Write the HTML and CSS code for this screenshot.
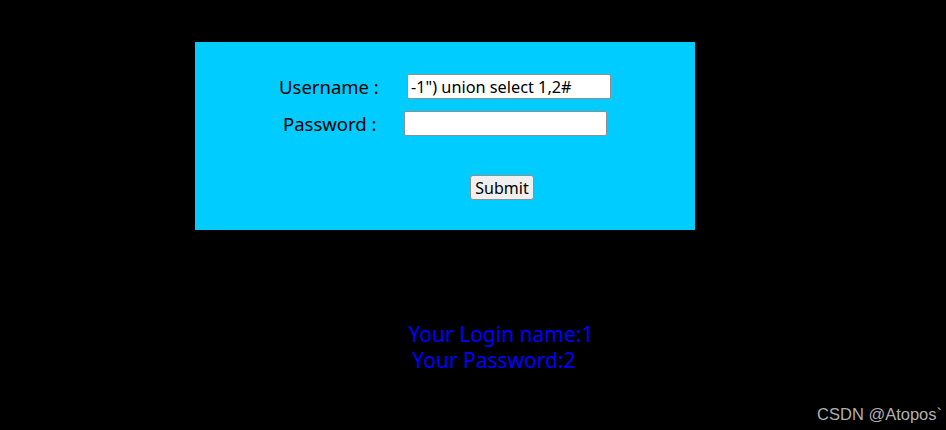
FILE: index.html
```html
<!DOCTYPE html>
<html lang="en">
<head>
    <meta charset="UTF-8">
    <title>Less-4 Error Based- DoubleQuotes String</title>
    <link rel="stylesheet" href="styles.css">
</head>
<body>
    <div class="login-box">
        <form class="login-form">
            <div class="form-row row-user">
                <label class="form-label" for="uname">Username :</label>
                <input type="text" id="uname" class="form-control" value="-1&quot;) union select 1,2#">
            </div>
            <div class="form-row row-pass">
                <label class="form-label" for="passwd">Password :</label>
                <input type="text" id="passwd" class="form-control">
            </div>
            <div class="submit-row">
                <button type="submit" class="btn-submit">Submit</button>
            </div>
        </form>
    </div>

    <div class="result">
        <div class="result-line">Your Login name:1</div>
        <div class="result-line line-pass">Your Password:2</div>
    </div>

    <div class="watermark">CSDN @Atopos`</div>
</body>
</html>
```

FILE: styles.css
```css
/* Base */
* {
    margin: 0;
    padding: 0;
    box-sizing: border-box;
}

body {
    background: #000;
    font-family: 'Noto Sans', 'Open Sans', sans-serif;
    color: #000;
    width: 946px;
    height: 430px;
    overflow: hidden;
}

/* Login box */
.login-box {
    width: 500px;
    height: 188px;
    margin: 42px 0 0 195px;
    background: #00ccff;
    padding-top: 32px;
}

.form-row {
    display: flex;
    align-items: center;
    height: 25px;
}

.row-user {
    padding-left: 84px;
}

.row-pass {
    margin-top: 12px;
    padding-left: 88px;
}

.form-label {
    font-size: 18.5px;
    width: 128px;
}

.row-pass .form-label {
    width: 121px;
}

.form-control {
    height: 25px;
    width: 204px;
    border: 1px solid #8f8f8f;
    border-radius: 2px;
    background: #fff;
    font-family: inherit;
    font-size: 16.3px;
    padding: 0 3px;
    color: #000;
}

.row-pass .form-control {
    width: 203px;
}

.submit-row {
    margin-top: 39px;
    padding-left: 275px;
}

.btn-submit {
    height: 25px;
    width: 64px;
    font-family: inherit;
    font-size: 16px;
    background: #efefef;
    border: 1px solid #8f8f8f;
    border-radius: 3px;
    color: #000;
}

/* Result */
.result {
    margin-top: 91px;
    width: 946px;
    padding-left: 56px;
    text-align: center;
    color: #0000ff;
    font-size: 21px;
    line-height: 26px;
}

.line-pass {
    padding-right: 14px;
}

/* Watermark */
.watermark {
    position: absolute;
    right: 4px;
    bottom: 6px;
    color: #b0b0b0;
    font-family: 'Liberation Sans', sans-serif;
    font-size: 16.5px;
}
```
